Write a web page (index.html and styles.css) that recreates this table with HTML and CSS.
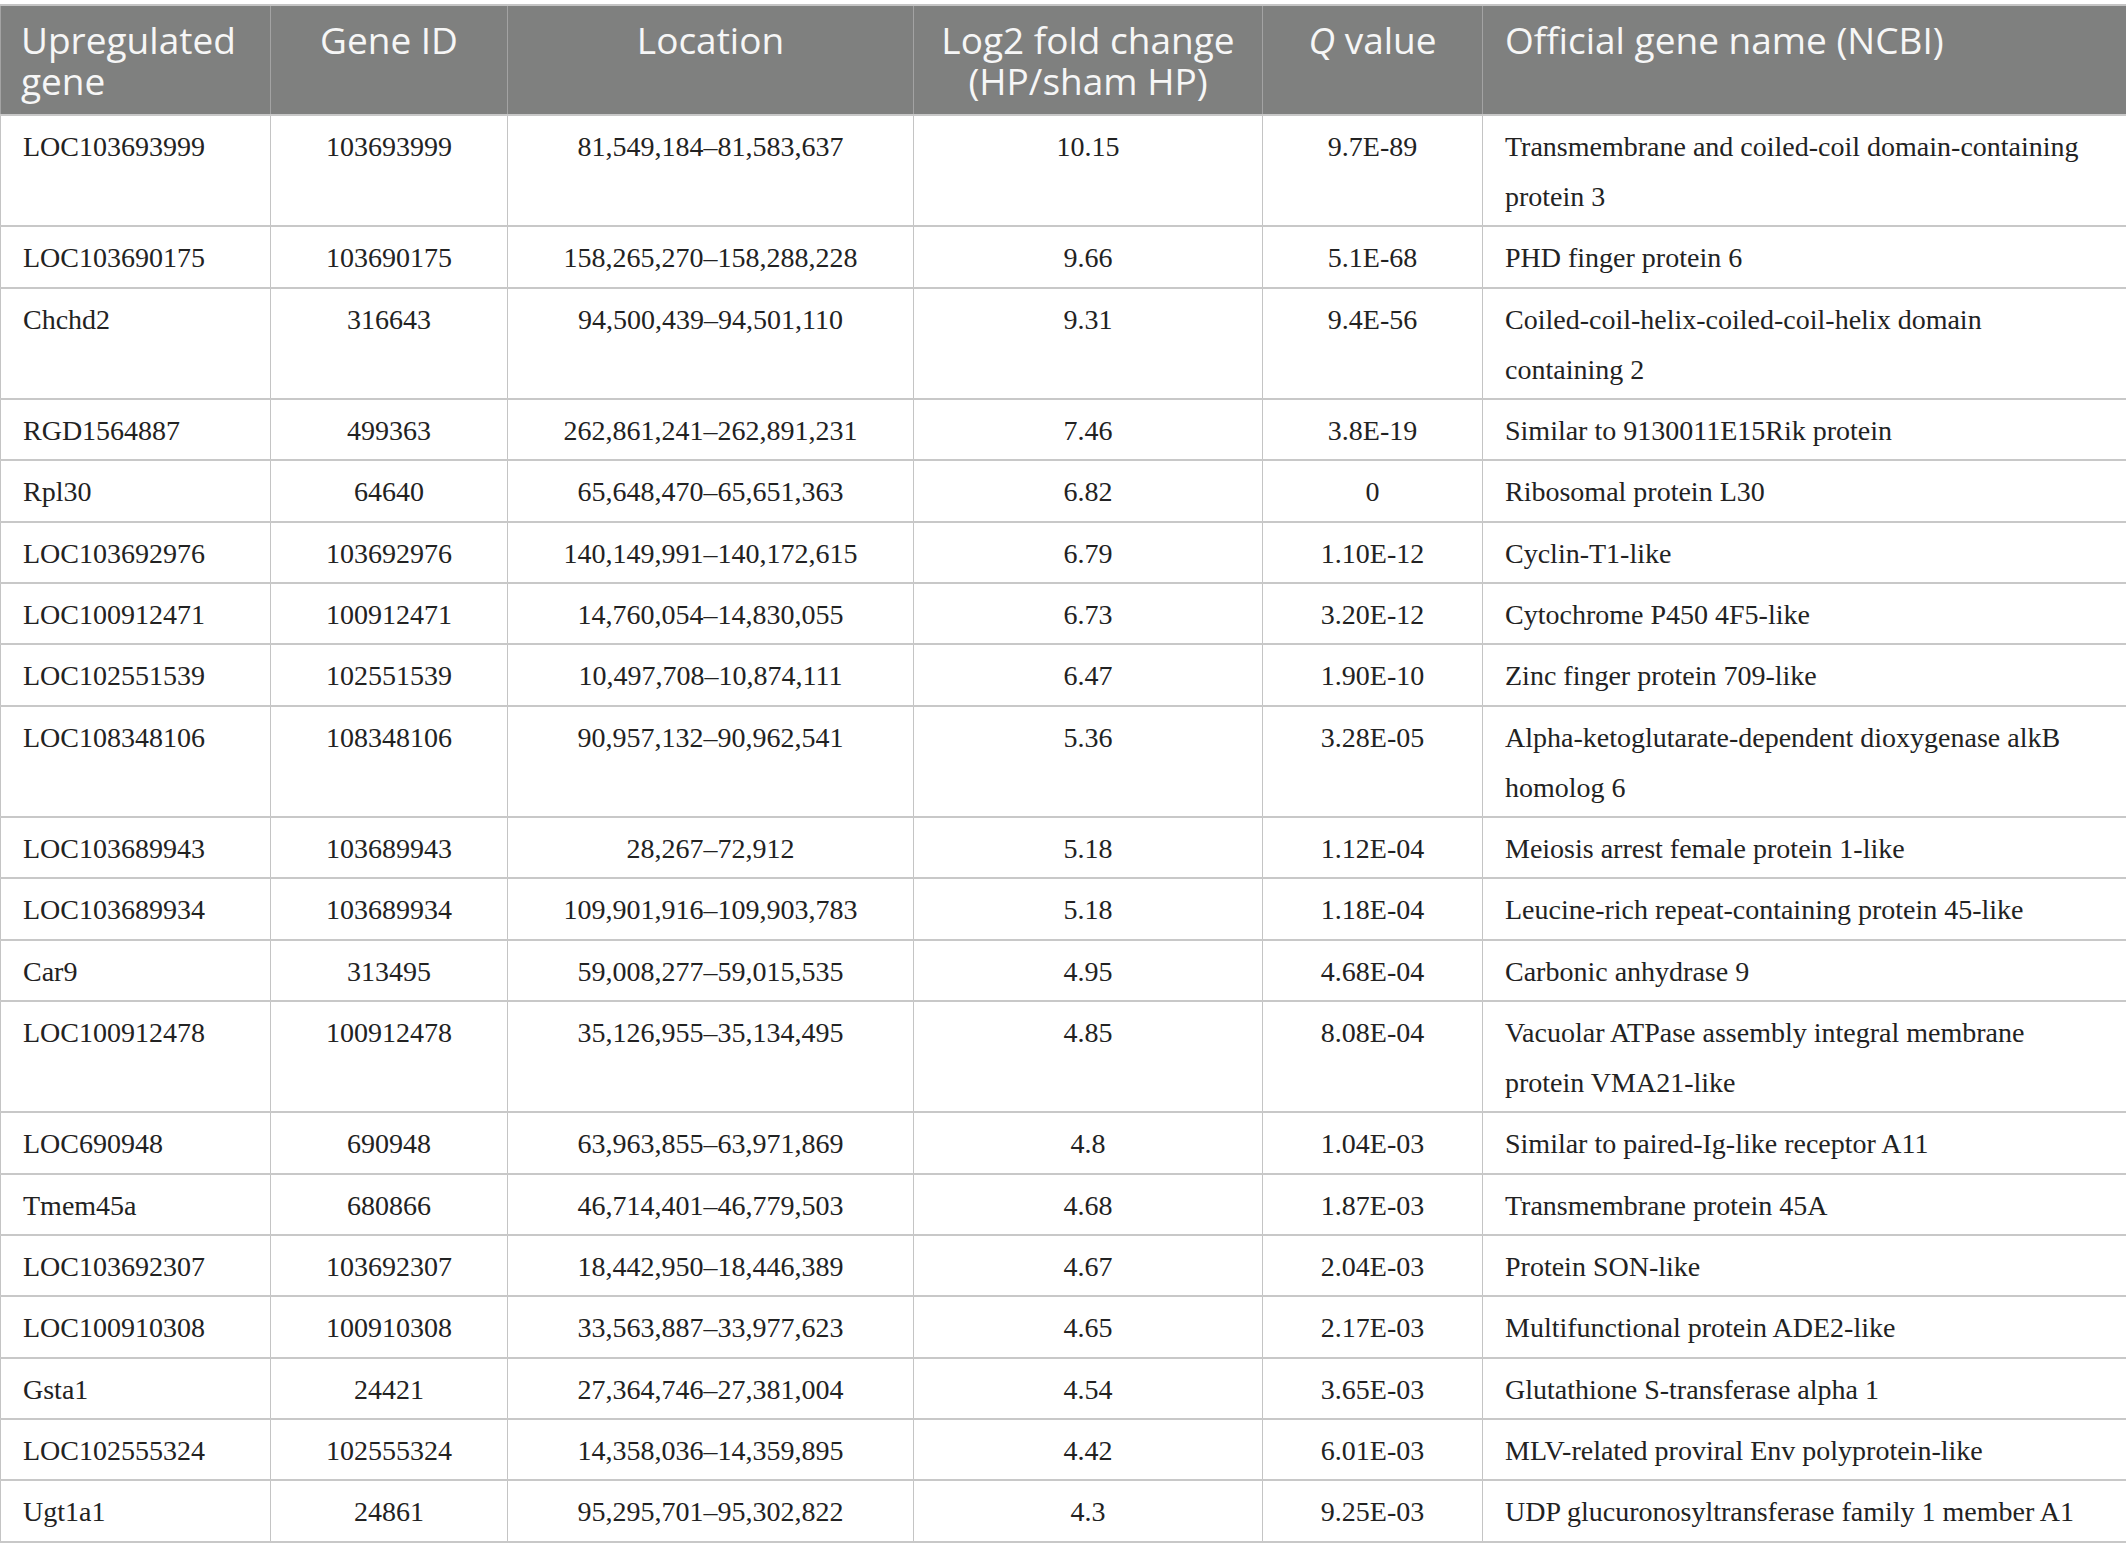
FILE: index.html
```html
<!DOCTYPE html>
<html lang="en">
<head>
<meta charset="utf-8">
<title>Upregulated genes</title>
<link rel="stylesheet" href="styles.css">
</head>
<body>
<table class="genes">
  <colgroup>
    <col class="c1"><col class="c2"><col class="c3"><col class="c4"><col class="c5"><col class="c6">
  </colgroup>
  <thead>
    <tr>
      <th class="left"><span class="hl">Upregulated</span><span class="hl">gene</span></th>
      <th><span class="hl">Gene ID</span></th>
      <th><span class="hl">Location</span></th>
      <th><span class="hl">Log2 fold change</span><span class="hl">(HP/sham HP)</span></th>
      <th><span class="hl"><i>Q</i> value</span></th>
      <th class="left"><span class="hl">Official gene name (NCBI)</span></th>
    </tr>
  </thead>
  <tbody>
    <tr><td>LOC103693999</td><td>103693999</td><td>81,549,184–81,583,637</td><td>10.15</td><td>9.7E-89</td><td>Transmembrane and coiled-coil domain-containing<br>protein 3</td></tr>
    <tr><td>LOC103690175</td><td>103690175</td><td>158,265,270–158,288,228</td><td>9.66</td><td>5.1E-68</td><td>PHD finger protein 6</td></tr>
    <tr><td>Chchd2</td><td>316643</td><td>94,500,439–94,501,110</td><td>9.31</td><td>9.4E-56</td><td>Coiled-coil-helix-coiled-coil-helix domain<br>containing 2</td></tr>
    <tr><td>RGD1564887</td><td>499363</td><td>262,861,241–262,891,231</td><td>7.46</td><td>3.8E-19</td><td>Similar to 9130011E15Rik protein</td></tr>
    <tr><td>Rpl30</td><td>64640</td><td>65,648,470–65,651,363</td><td>6.82</td><td>0</td><td>Ribosomal protein L30</td></tr>
    <tr><td>LOC103692976</td><td>103692976</td><td>140,149,991–140,172,615</td><td>6.79</td><td>1.10E-12</td><td>Cyclin-T1-like</td></tr>
    <tr><td>LOC100912471</td><td>100912471</td><td>14,760,054–14,830,055</td><td>6.73</td><td>3.20E-12</td><td>Cytochrome P450 4F5-like</td></tr>
    <tr><td>LOC102551539</td><td>102551539</td><td>10,497,708–10,874,111</td><td>6.47</td><td>1.90E-10</td><td>Zinc finger protein 709-like</td></tr>
    <tr><td>LOC108348106</td><td>108348106</td><td>90,957,132–90,962,541</td><td>5.36</td><td>3.28E-05</td><td>Alpha-ketoglutarate-dependent dioxygenase alkB<br>homolog 6</td></tr>
    <tr><td>LOC103689943</td><td>103689943</td><td>28,267–72,912</td><td>5.18</td><td>1.12E-04</td><td>Meiosis arrest female protein 1-like</td></tr>
    <tr><td>LOC103689934</td><td>103689934</td><td>109,901,916–109,903,783</td><td>5.18</td><td>1.18E-04</td><td>Leucine-rich repeat-containing protein 45-like</td></tr>
    <tr><td>Car9</td><td>313495</td><td>59,008,277–59,015,535</td><td>4.95</td><td>4.68E-04</td><td>Carbonic anhydrase 9</td></tr>
    <tr><td>LOC100912478</td><td>100912478</td><td>35,126,955–35,134,495</td><td>4.85</td><td>8.08E-04</td><td>Vacuolar ATPase assembly integral membrane<br>protein VMA21-like</td></tr>
    <tr><td>LOC690948</td><td>690948</td><td>63,963,855–63,971,869</td><td>4.8</td><td>1.04E-03</td><td>Similar to paired-Ig-like receptor A11</td></tr>
    <tr><td>Tmem45a</td><td>680866</td><td>46,714,401–46,779,503</td><td>4.68</td><td>1.87E-03</td><td>Transmembrane protein 45A</td></tr>
    <tr><td>LOC103692307</td><td>103692307</td><td>18,442,950–18,446,389</td><td>4.67</td><td>2.04E-03</td><td>Protein SON-like</td></tr>
    <tr><td>LOC100910308</td><td>100910308</td><td>33,563,887–33,977,623</td><td>4.65</td><td>2.17E-03</td><td>Multifunctional protein ADE2-like</td></tr>
    <tr><td>Gsta1</td><td>24421</td><td>27,364,746–27,381,004</td><td>4.54</td><td>3.65E-03</td><td>Glutathione S-transferase alpha 1</td></tr>
    <tr><td>LOC102555324</td><td>102555324</td><td>14,358,036–14,359,895</td><td>4.42</td><td>6.01E-03</td><td>MLV-related proviral Env polyprotein-like</td></tr>
    <tr><td>Ugt1a1</td><td>24861</td><td>95,295,701–95,302,822</td><td>4.3</td><td>9.25E-03</td><td>UDP glucuronosyltransferase family 1 member A1</td></tr>
  </tbody>
</table>
</body>
</html>
```

FILE: styles.css
```css
html, body {
  margin: 0;
  padding: 0;
  background: #ffffff;
}

body {
  padding-top: 4px;
}

.genes {
  width: 2126px;
  table-layout: fixed;
  border-collapse: collapse;
  border: 2px solid #c4c4c4;
  border-left-width: 1px;
  border-right-width: 1px;
}

.c1 { width: 270px; }
.c2 { width: 237px; }
.c3 { width: 406px; }
.c4 { width: 349px; }
.c5 { width: 220px; }
.c6 { width: 644px; }

.genes th {
  background: #7f807f;
  color: #f6f6f6;
  font-family: "Open Sans", "Noto Sans", sans-serif;
  font-weight: 400;
  font-size: 37px;
  letter-spacing: 0;
  line-height: 41px;
  text-align: center;
  vertical-align: top;
  padding: 13px 20px 13px;
  border-left: 1px solid #a3a3a3;
  border-right: 1px solid #a3a3a3;
  border-top: 2px solid #c4c4c4;
}

.genes th .hl {
  display: block;
  height: 41px;
  line-height: 41px;
  white-space: nowrap;
}

.genes th.left {
  text-align: left;
}

.genes td {
  font-family: "Liberation Serif", "Times New Roman", serif;
  font-size: 28px;
  line-height: 50px;
  color: #222222;
  text-align: center;
  vertical-align: top;
  padding: 6px 20px 3.33px;
  border-top: 2px solid #c8c8c8;
  border-bottom: 2px solid #c8c8c8;
  border-left: 1px solid #c4c4c4;
  border-right: 1px solid #c4c4c4;
}

.genes td:first-child {
  text-align: left;
  padding-left: 22px;
}

.genes td:last-child {
  text-align: left;
  padding-left: 22px;
  padding-right: 10px;
}

.genes th:first-child {
  padding-left: 20px;
}

.genes th:last-child {
  padding-left: 22px;
}
```
